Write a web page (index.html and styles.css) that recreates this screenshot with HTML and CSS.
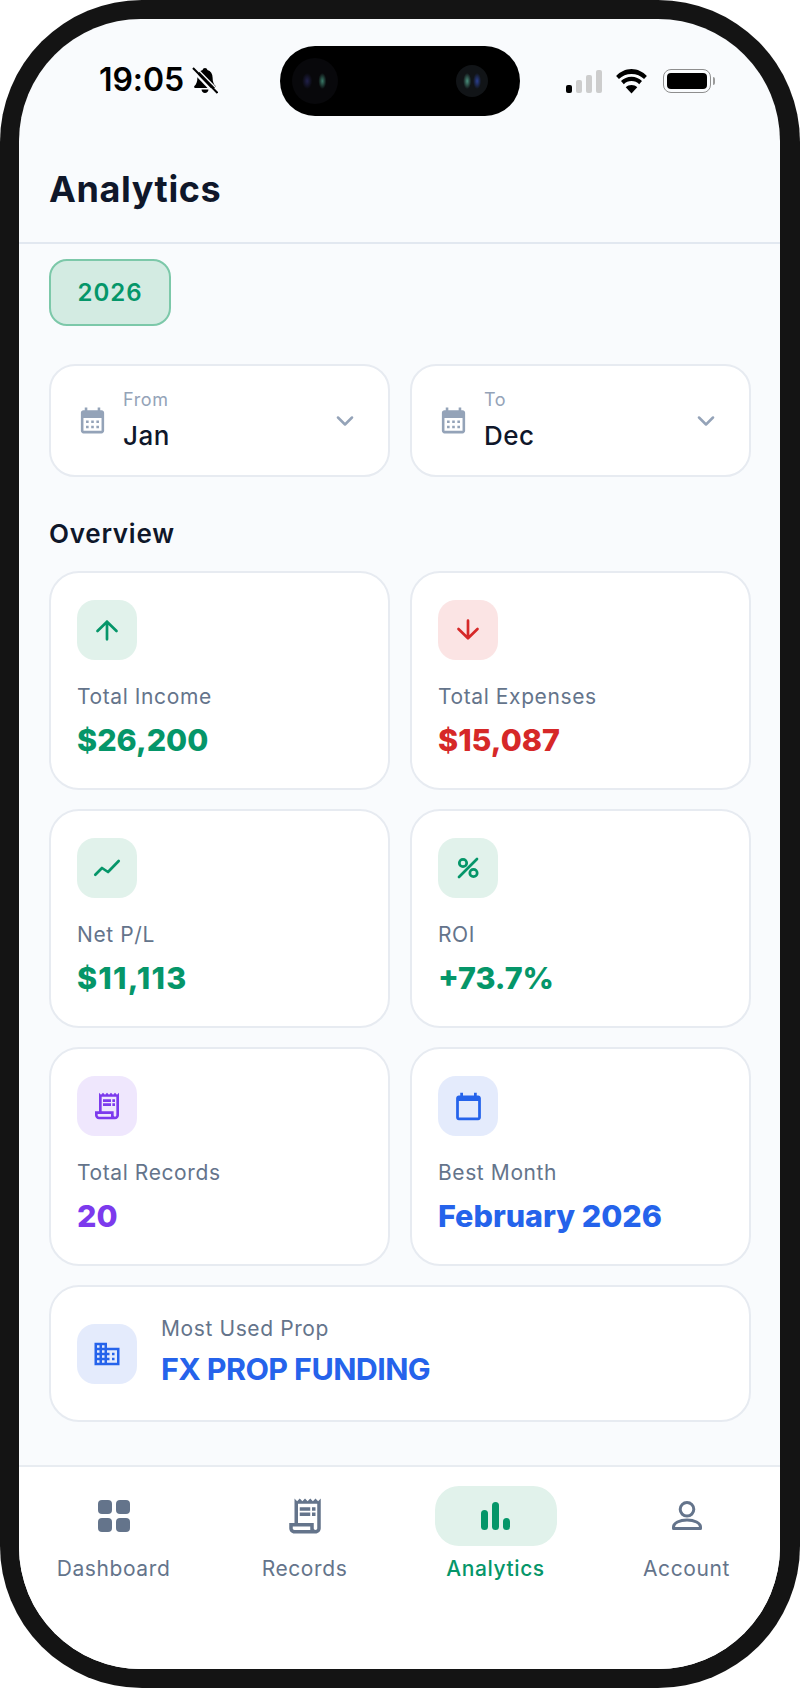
FILE: index.html
```html
<!DOCTYPE html>
<html lang="en">
<head>
<meta charset="utf-8">
<title>Analytics</title>
<link rel="stylesheet" href="styles.css">
</head>
<body>
<div class="phone">
  <div class="screen">
    <div class="island">
      <span class="cam cam-left"></span>
      <span class="cam cam-right"></span>
    </div>
    <div class="status">
      <div class="status-left">
        <span class="time">19:05</span>
        <svg class="bell" viewBox="0 0 26 27"><path d="M13 1c1.300 0 2.200.9 2.400 2 3.400 1 5.200 3.900 5.200 7.500 0 4.600 1.200 6.800 3 8.600.7.8.2 1.900-.8 1.900H3.200c-1 0-1.500-1.100-.8-1.900 1.800-1.800 3-4 3-8.600 0-3.600 1.800-6.500 5.200-7.500.2-1.100 1.100-2 2.400-2zM9.500 22.500h7c-.2 2-1.600 3.500-3.500 3.500s-3.300-1.500-3.500-3.500z" fill="#000"/><path d="M0 3 22.500 26.500" stroke="#f9fbfd" stroke-width="2.500"/><path d="M1 1 25.500 26" stroke="#000" stroke-width="2"/><path d="M4 .5 26 23" stroke="#f9fbfd" stroke-width="1.300"/></svg>
      </div>
      <div class="status-right">
        <div class="signal"><i class="bar b1"></i><i class="bar b2"></i><i class="bar b3"></i><i class="bar b4"></i></div>
        <svg class="wifi" viewBox="0 0 32 24"><path d="M16 5.500c4.500 0 8.600 1.800 11.600 4.700l2.600-2.900C26.500 3.600 21.500 1 16 1S5.500 3.600 1.800 7.300l2.600 2.900C7.400 7.300 11.500 5.500 16 5.500z" fill="#000"/><path d="M16 12c2.800 0 5.200 1.100 7.100 2.900l2.600-2.900C23.200 9.500 19.800 8 16 8s-7.200 1.500-9.700 4l2.600 2.900C10.800 13.100 13.200 12 16 12z" fill="#000"/><path d="M16 23.500l5.300-5.700C19.900 16.500 18 15.700 16 15.700s-3.900.8-5.300 2.100z" fill="#000"/></svg>
        <div class="battery"><span class="battery-fill"></span></div>
        <span class="battery-nub"></span>
      </div>
    </div>
    <header class="header"><h1 class="title">Analytics</h1></header>
    <main class="content">
      <div class="chip">2026</div>
      <div class="range">
        <div class="select">
          <svg class="cal-icon" viewBox="0 0 24 24"><path d="M19 4h-1V2h-2v2H8V2H6v2H5c-1.110 0-1.990.9-1.990 2L3 20c0 1.100.89 2 2 2h14c1.100 0 2-.9 2-2V6c0-1.100-.9-2-2-2zm0 16H5V10h14v10zM9 14H7v-2h2v2zm4 0h-2v-2h2v2zm4 0h-2v-2h2v2zm-8 4H7v-2h2v2zm4 0h-2v-2h2v2zm4 0h-2v-2h2v2z"/></svg>
          <div class="select-text"><span class="select-label">From</span><span class="select-value">Jan</span></div>
          <svg class="chevron" viewBox="0 0 18 10"><path d="M2 1.500 9 8.500 16 1.500"/></svg>
        </div>
        <div class="select">
          <svg class="cal-icon" viewBox="0 0 24 24"><path d="M19 4h-1V2h-2v2H8V2H6v2H5c-1.110 0-1.990.9-1.990 2L3 20c0 1.100.89 2 2 2h14c1.100 0 2-.9 2-2V6c0-1.100-.9-2-2-2zm0 16H5V10h14v10zM9 14H7v-2h2v2zm4 0h-2v-2h2v2zm4 0h-2v-2h2v2zm-8 4H7v-2h2v2zm4 0h-2v-2h2v2zm4 0h-2v-2h2v2z"/></svg>
          <div class="select-text"><span class="select-label">To</span><span class="select-value">Dec</span></div>
          <svg class="chevron" viewBox="0 0 18 10"><path d="M2 1.500 9 8.500 16 1.500"/></svg>
        </div>
      </div>
      <h2 class="section">Overview</h2>
      <div class="grid">
        <div class="card">
          <div class="tile tile-green"><svg class="ico" viewBox="0 0 30 30"><path class="stroke" d="M15 24.300V6.700M5.500 16 15 6.700 24.500 16"/></svg></div>
          <div class="label">Total Income</div>
          <div class="value green">$26,200</div>
        </div>
        <div class="card">
          <div class="tile tile-red"><svg class="ico" viewBox="0 0 30 30"><path class="stroke" d="M15 5.700v17.600M5.500 14 15 23.300 24.500 14"/></svg></div>
          <div class="label">Total Expenses</div>
          <div class="value red">$15,087</div>
        </div>
        <div class="card">
          <div class="tile tile-green"><svg class="ico" viewBox="0 0 30 30"><path class="stroke" d="M3.300 21.700 10 15l6 4L26.700 8"/></svg></div>
          <div class="label">Net P/L</div>
          <div class="value green value-ones">$11,113</div>
        </div>
        <div class="card">
          <div class="tile tile-green"><svg class="ico" viewBox="0 0 30 30"><path class="stroke" d="M24 6 6 24"/><circle class="stroke" cx="10" cy="10" r="3.700"/><circle class="stroke" cx="20.500" cy="20" r="3.700"/></svg></div>
          <div class="label">ROI</div>
          <div class="value green">+73.7%</div>
        </div>
        <div class="card">
          <div class="tile tile-purple"><svg class="ico-receipt" viewBox="0 0 24 24"><path d="M19.500 3.500 18 2l-1.500 1.500L15 2l-1.500 1.500L12 2l-1.500 1.500L9 2 7.500 3.500 6 2v14H3v3c0 1.660 1.340 3 3 3h12c1.660 0 3-1.340 3-3V2l-1.500 1.500zM15 20H6c-.55 0-1-.45-1-1v-1h10v2zm4-1c0 .55-.45 1-1 1s-1-.45-1-1v-3H8V5h11v14z"/><path d="M9 7h6v2H9zm7 0h2v2h-2zm-7 3h6v2H9zm7 0h2v2h-2z"/></svg></div>
          <div class="label">Total Records</div>
          <div class="value purple">20</div>
        </div>
        <div class="card">
          <div class="tile tile-blue"><svg class="ico-cal" viewBox="0 0 24 24"><path d="M19 4h-1V2h-2v2H8V2H6v2H5c-1.100 0-2 .9-2 2v14c0 1.100.9 2 2 2h14c1.100 0 2-.9 2-2V6c0-1.100-.9-2-2-2zm0 16H5V8h14v12z"/></svg></div>
          <div class="label">Best Month</div>
          <div class="value blue">February 2026</div>
        </div>
      </div>
      <div class="wide-card">
        <div class="tile tile-blue"><svg class="ico-biz" viewBox="0 0 24 24"><path d="M12 7V3H2v18h20V7H12zM6 19H4v-2h2v2zm0-4H4v-2h2v2zm0-4H4V9h2v2zm0-4H4V5h2v2zm4 12H8v-2h2v2zm0-4H8v-2h2v2zm0-4H8V9h2v2zm0-4H8V5h2v2zm10 12h-8v-2h2v-2h-2v-2h2v-2h-2V9h8v10zm-2-8h-2v2h2v-2zm0 4h-2v2h2v-2z"/></svg></div>
        <div class="wide-text">
          <div class="label label-wide">Most Used Prop</div>
          <div class="value blue value-wide">FX PROP FUNDING</div>
        </div>
      </div>
    </main>
    <nav class="nav">
      <div class="nav-item">
        <div class="nav-icon"><svg class="nav-grid" viewBox="0 0 32 32"><rect x="0" y="0" width="14" height="14" rx="4"/><rect x="18" y="0" width="14" height="14" rx="4"/><rect x="0" y="18" width="14" height="14" rx="4"/><rect x="18" y="18" width="14" height="14" rx="4"/></svg></div>
        <span class="nav-label">Dashboard</span>
      </div>
      <div class="nav-item">
        <div class="nav-icon"><svg class="nav-receipt" viewBox="0 0 24 24"><path d="M19.500 3.500 18 2l-1.500 1.500L15 2l-1.500 1.500L12 2l-1.500 1.500L9 2 7.500 3.500 6 2v14H3v3c0 1.660 1.340 3 3 3h12c1.660 0 3-1.340 3-3V2l-1.500 1.500zM15 20H6c-.55 0-1-.45-1-1v-1h10v2zm4-1c0 .55-.45 1-1 1s-1-.45-1-1v-3H8V5h11v14z"/><path d="M9 7h6v2H9zm7 0h2v2h-2zm-7 3h6v2H9zm7 0h2v2h-2z"/></svg></div>
        <span class="nav-label">Records</span>
      </div>
      <div class="nav-item active">
        <div class="nav-icon nav-pill"><svg class="nav-bars" viewBox="0 0 29 28"><rect x="0" y="8" width="7" height="20" rx="3.500"/><rect x="11" y="0" width="7" height="28" rx="3.500"/><rect x="22" y="16" width="7" height="12" rx="3.500"/></svg></div>
        <span class="nav-label">Analytics</span>
      </div>
      <div class="nav-item">
        <div class="nav-icon"><svg class="nav-user" viewBox="0 0 30 30"><circle cx="15" cy="8.300" r="6.800"/><path d="M1.500 27.500v-1.500c0-4 6-7 13.500-7s13.500 3 13.500 7v1.500z"/></svg></div>
        <span class="nav-label">Account</span>
      </div>
    </nav>
  </div>
</div>
</body>
</html>
```
FILE: styles.css
```css
* { box-sizing: border-box; }
html, body { margin: 0; padding: 0; background: #fff; }
body { font-family: Inter, "Liberation Sans", sans-serif; }

.phone {
  width: 800px;
  height: 1688px;
  padding: 19px 20px 19px 19px;
  background: #141414;
  border-radius: 142px;
}
.screen {
  position: relative;
  width: 761px;
  height: 1650px;
  display: flex;
  flex-direction: column;
  background: #f9fbfd;
  border-radius: 122px;
  overflow: hidden;
}

/* Dynamic island */
.island {
  position: absolute;
  left: 261px;
  top: 27px;
  width: 240px;
  height: 70px;
  border-radius: 35px;
  background: #000;
}
.cam { position: absolute; border-radius: 50%; top: 50%; transform: translateY(-50%); }
.cam-left {
  left: 12px; width: 46px; height: 46px;
  background:
    radial-gradient(ellipse 5px 8px at 33% 50%, #20204a 0, rgba(32,32,74,0) 100%),
    radial-gradient(ellipse 4px 8px at 66% 50%, #3a7a68 0, rgba(58,122,104,0) 100%),
    #08080b;
}
.cam-right {
  left: 176px; width: 32px; height: 32px;
  background:
    radial-gradient(ellipse 4px 8px at 35% 50%, #4a8f7c 0, rgba(74,143,124,0) 100%),
    radial-gradient(ellipse 4px 8px at 66% 50%, #2a3f90 0, rgba(42,63,144,0) 100%),
    #111417;
}

/* Status bar */
.status {
  height: 122px;
  flex: none;
  display: flex;
  justify-content: space-between;
  align-items: flex-start;
  padding: 42px 65px 0 80px;
}
.status-left { display: flex; align-items: center; gap: 8px; }
.time { font-size: 32px; line-height: 38px; font-weight: 600; color: #000; letter-spacing: -.1px; }
.bell { width: 26px; height: 27px; }
.status-right { display: flex; align-items: center; padding-top: 7px; }
.signal { display: flex; align-items: flex-end; gap: 4px; height: 23px; margin-right: 12px; }
.bar { display: block; width: 6px; border-radius: 2px; background: #cdcdcd; }
.b1 { height: 8px; background: #000; }
.b2 { height: 13px; }
.b3 { height: 18px; }
.b4 { height: 23px; }
.wifi { width: 35px; height: 26px; margin-right: 14px; }
.battery {
  width: 48px; height: 24px; padding: 3px;
  border: 1.500px solid #8e8e8e; border-radius: 8px;
}
.battery-fill { display: block; height: 100%; border-radius: 4px; background: #000; }
.battery-nub { width: 2px; height: 8px; margin-left: 2px; background: #9a9a9a; border-radius: 0 2px 2px 0; }

/* Header */
.header {
  flex: none;
  height: 103px;
  padding: 24px 30px 0;
  border-bottom: 2px solid #e2e8f0;
}
.title { margin: 0; font-size: 36px; line-height: 48px; font-weight: 700; color: #0f172a; letter-spacing: .6px; }

/* Content */
.content { flex: 1; min-height: 0; padding: 15px 29px 0 30px; }
.chip {
  width: 122px; height: 67px;
  display: flex; align-items: center; justify-content: center;
  padding-bottom: 1px;
  border: 2px solid #7cc8a9; border-radius: 18px;
  background: #d3ebe2;
  color: #059669; font-size: 24px; font-weight: 600; letter-spacing: 1px;
}
.range { display: grid; grid-template-columns: 1fr 1fr; gap: 20px; margin-top: 38px; }
.select {
  height: 113px;
  display: flex; align-items: center;
  padding: 0 34px 0 26px;
  background: #fff;
  border: 2px solid #e7ebf1;
  border-radius: 26px;
}
.cal-icon { width: 31px; height: 31px; fill: #94a3b8; flex: none; }
.select-text { flex: 1; display: flex; flex-direction: column; margin-left: 15px; }
.select-label { font-size: 18px; line-height: 26px; color: #94a3b8; letter-spacing: .6px; }
.select-value { font-size: 26px; line-height: 36px; margin-top: 5px; font-weight: 500; color: #0f172a; letter-spacing: .5px; }
.chevron { width: 18px; height: 10px; fill: none; stroke: #94a3b8; stroke-width: 2.500px; stroke-linecap: round; stroke-linejoin: round; }

.section { margin: 41px 0 21px; font-size: 26px; line-height: 32px; font-weight: 600; color: #0f172a; letter-spacing: .75px; }

/* Cards */
.grid { display: grid; grid-template-columns: 1fr 1fr; gap: 19px 20px; }
.card {
  height: 219px;
  padding: 27px 26px;
  background: #fff;
  border: 2px solid #e7ebf1;
  border-radius: 30px;
}
.tile { width: 60px; height: 60px; display: flex; align-items: center; justify-content: center; border-radius: 18px; flex: none; }
.tile-green { background: #e1f2eb; }
.tile-red { background: #fbe4e4; }
.tile-purple { background: #efe7fd; }
.tile-blue { background: #e4ebfc; }
.tile-green .stroke { stroke: #059669; }
.tile-red .stroke { stroke: #d62828; }
.ico { width: 30px; height: 30px; }
.stroke { fill: none; stroke-width: 2.700px; stroke-linecap: round; stroke-linejoin: round; }
.ico-receipt { width: 32px; height: 32px; fill: #7c3aed; }
.ico-cal { width: 33px; height: 33px; fill: #2563eb; }
.ico-biz { width: 30px; height: 30px; fill: #2563eb; }

.label { margin-top: 24px; font-size: 21px; line-height: 26px; color: #64748b; letter-spacing: .6px; }
.value { margin-top: 8px; font-size: 30.500px; line-height: 44px; font-weight: 800; }
.value-ones { letter-spacing: 1.200px; }
.green { color: #059669; }
.red { color: #d62828; }
.purple { color: #7c3aed; }
.blue { color: #2563eb; }

.wide-card {
  height: 137px;
  margin-top: 19px;
  padding: 0 26px;
  display: flex; align-items: center; gap: 24px;
  background: #fff;
  border: 2px solid #e7ebf1;
  border-radius: 30px;
}
.label-wide { margin-top: 0; }
.value-wide { margin-top: 5px; font-weight: 700; letter-spacing: -.6px; }

/* Bottom nav */
.nav {
  flex: none;
  height: 204px;
  display: grid;
  grid-template-columns: repeat(4, 191px);
  justify-content: center;
  padding: 19px 0 0 1px;
  background: #fff;
  border-top: 2px solid #e8ecf1;
}
.nav-item { display: flex; flex-direction: column; align-items: center; color: #64748b; }
.nav-item.active { color: #059669; }
.nav-icon { width: 122px; height: 60px; display: flex; align-items: center; justify-content: center; border-radius: 24px; }
.nav-pill { background: #e1f2eb; }
.nav-grid { width: 32px; height: 32px; fill: #64748b; }
.nav-receipt { width: 42px; height: 42px; fill: #64748b; }
.nav-bars { width: 29px; height: 28px; fill: #059669; }
.nav-user { width: 30px; height: 30px; fill: none; stroke: #64748b; stroke-width: 3px; stroke-linejoin: round; }
.nav-label { margin-top: 10px; font-size: 21px; line-height: 26px; letter-spacing: .6px; }
.nav-item.active .nav-label { font-weight: 500; }
```
